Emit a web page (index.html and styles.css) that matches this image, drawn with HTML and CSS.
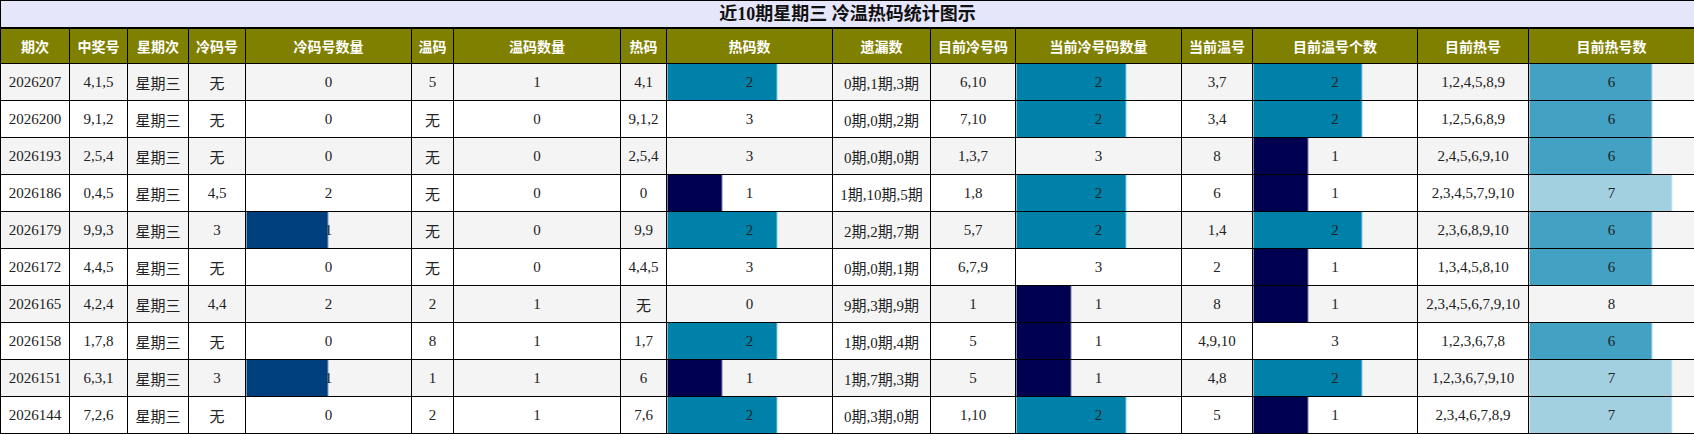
FILE: index.html
```html
<!DOCTYPE html>
<html lang="zh-CN">
<head>
<meta charset="utf-8">
<title>近10期星期三 冷温热码统计图示</title>
<link rel="stylesheet" href="styles.css">
</head>
<body>
<table class="stats">
  <colgroup>
    <col class="w69"><col class="w58"><col class="w61"><col class="w57"><col class="w166"><col class="w42"><col class="w167"><col class="w46"><col class="w166"><col class="w98"><col class="w85"><col class="w166"><col class="w71"><col class="w165"><col class="w111"><col class="w166">
  </colgroup>
  <thead>
    <tr class="title-row"><th colspan="16" class="title">近10期星期三 冷温热码统计图示</th></tr>
    <tr class="head-row">
      <th>期次</th><th>中奖号</th><th>星期次</th><th>冷码号</th><th>冷码号数量</th><th>温码</th><th>温码数量</th><th>热码</th><th>热码数</th><th>遗漏数</th><th>目前冷号码</th><th>当前冷号码数量</th><th>当前温号</th><th>目前温号个数</th><th>目前热号</th><th>目前热号数</th>
    </tr>
  </thead>
  <tbody>
    <tr>
      <td>2026207</td><td>4,1,5</td><td>星期三</td><td>无</td><td>0</td><td>5</td><td>1</td><td>4,1</td>
      <td class="bar teal" style="--w:66.4%">2</td><td>0期,1期,3期</td><td>6,10</td>
      <td class="bar teal" style="--w:66.4%">2</td><td>3,7</td>
      <td class="bar teal" style="--w:66.4%">2</td><td>1,2,4,5,8,9</td>
      <td class="bar sky" style="--w:74.5%">6</td>
    </tr>
    <tr>
      <td>2026200</td><td>9,1,2</td><td>星期三</td><td>无</td><td>0</td><td>无</td><td>0</td><td>9,1,2</td>
      <td>3</td><td>0期,0期,2期</td><td>7,10</td>
      <td class="bar teal" style="--w:66.4%">2</td><td>3,4</td>
      <td class="bar teal" style="--w:66.4%">2</td><td>1,2,5,6,8,9</td>
      <td class="bar sky" style="--w:74.5%">6</td>
    </tr>
    <tr>
      <td>2026193</td><td>2,5,4</td><td>星期三</td><td>无</td><td>0</td><td>无</td><td>0</td><td>2,5,4</td>
      <td>3</td><td>0期,0期,0期</td><td>1,3,7</td>
      <td>3</td><td>8</td>
      <td class="bar navy" style="--w:33.3%">1</td><td>2,4,5,6,9,10</td>
      <td class="bar sky" style="--w:74.5%">6</td>
    </tr>
    <tr>
      <td>2026186</td><td>0,4,5</td><td>星期三</td><td>4,5</td><td>2</td><td>无</td><td>0</td><td>0</td>
      <td class="bar navy" style="--w:33.3%">1</td><td>1期,10期,5期</td><td>1,8</td>
      <td class="bar teal" style="--w:66.4%">2</td><td>6</td>
      <td class="bar navy" style="--w:33.3%">1</td><td>2,3,4,5,7,9,10</td>
      <td class="bar pale" style="--w:86.7%">7</td>
    </tr>
    <tr>
      <td>2026179</td><td>9,9,3</td><td>星期三</td><td>3</td>
      <td class="bar cobalt" style="--w:49.7%">1</td><td>无</td><td>0</td><td>9,9</td>
      <td class="bar teal" style="--w:66.4%">2</td><td>2期,2期,7期</td><td>5,7</td>
      <td class="bar teal" style="--w:66.4%">2</td><td>1,4</td>
      <td class="bar teal" style="--w:66.4%">2</td><td>2,3,6,8,9,10</td>
      <td class="bar sky" style="--w:74.5%">6</td>
    </tr>
    <tr>
      <td>2026172</td><td>4,4,5</td><td>星期三</td><td>无</td><td>0</td><td>无</td><td>0</td><td>4,4,5</td>
      <td>3</td><td>0期,0期,1期</td><td>6,7,9</td>
      <td>3</td><td>2</td>
      <td class="bar navy" style="--w:33.3%">1</td><td>1,3,4,5,8,10</td>
      <td class="bar sky" style="--w:74.5%">6</td>
    </tr>
    <tr>
      <td>2026165</td><td>4,2,4</td><td>星期三</td><td>4,4</td><td>2</td><td>2</td><td>1</td><td>无</td>
      <td>0</td><td>9期,3期,9期</td><td>1</td>
      <td class="bar navy" style="--w:33.3%">1</td><td>8</td>
      <td class="bar navy" style="--w:33.3%">1</td><td>2,3,4,5,6,7,9,10</td>
      <td>8</td>
    </tr>
    <tr>
      <td>2026158</td><td>1,7,8</td><td>星期三</td><td>无</td><td>0</td><td>8</td><td>1</td><td>1,7</td>
      <td class="bar teal" style="--w:66.4%">2</td><td>1期,0期,4期</td><td>5</td>
      <td class="bar navy" style="--w:33.3%">1</td><td>4,9,10</td>
      <td>3</td><td>1,2,3,6,7,8</td>
      <td class="bar sky" style="--w:74.5%">6</td>
    </tr>
    <tr>
      <td>2026151</td><td>6,3,1</td><td>星期三</td><td>3</td>
      <td class="bar cobalt" style="--w:49.7%">1</td><td>1</td><td>1</td><td>6</td>
      <td class="bar navy" style="--w:33.3%">1</td><td>1期,7期,3期</td><td>5</td>
      <td class="bar navy" style="--w:33.3%">1</td><td>4,8</td>
      <td class="bar teal" style="--w:66.4%">2</td><td>1,2,3,6,7,9,10</td>
      <td class="bar pale" style="--w:86.7%">7</td>
    </tr>
    <tr>
      <td>2026144</td><td>7,2,6</td><td>星期三</td><td>无</td><td>0</td><td>2</td><td>1</td><td>7,6</td>
      <td class="bar teal" style="--w:66.4%">2</td><td>0期,3期,0期</td><td>1,10</td>
      <td class="bar teal" style="--w:66.4%">2</td><td>5</td>
      <td class="bar navy" style="--w:33.3%">1</td><td>2,3,4,6,7,8,9</td>
      <td class="bar pale" style="--w:86.7%">7</td>
    </tr>
  </tbody>
</table>
</body>
</html>
```
FILE: styles.css
```css
html, body {
  margin: 0;
  padding: 0;
  background: #ffffff;
}

.stats {
  border-collapse: collapse;
  table-layout: fixed;
  width: 1694px;
  font-family: "Liberation Serif", "Noto Sans CJK SC", serif;
  font-size: 15px;
  color: #222222;
}

.w69 { width: 69px; }
.w58 { width: 58px; }
.w61 { width: 61px; }
.w57 { width: 57px; }
.w166 { width: 166px; }
.w42 { width: 42px; }
.w167 { width: 167px; }
.w46 { width: 46px; }
.w98 { width: 98px; }
.w85 { width: 85px; }
.w71 { width: 71px; }
.w165 { width: 165px; }
.w111 { width: 111px; }

.stats th,
.stats td {
  border: 1px solid #000000;
  padding: 0;
  text-align: center;
  vertical-align: middle;
  white-space: nowrap;
  overflow: hidden;
}

.title-row { height: 27px; }

.title {
  background: #e6e6fa;
  color: #111111;
  font-family: "Liberation Serif", "Noto Sans CJK SC", serif;
  font-size: 18px;
  font-weight: bold;
  border-bottom: 2px solid #000000 !important;
  line-height: 24px;
}

.head-row { height: 36px; }

.head-row th {
  background: #808000;
  color: #ffffff;
  font-family: "Liberation Sans", "Noto Sans CJK SC", sans-serif;
  font-size: 14px;
  font-weight: bold;
}

.stats tbody tr { height: 37px; }
.stats tbody tr:nth-child(odd) td { background-color: #f4f4f4; }
.stats tbody tr:nth-child(even) td { background-color: #ffffff; }

.stats tbody td.bar {
  background-image: linear-gradient(to right,
    var(--c) calc(var(--w) - 1px),
    var(--edge) calc(var(--w) - 1px),
    var(--edge) var(--w),
    transparent var(--w));
}

.navy { --c: #000050; --edge: #7a7aa8; }
.cobalt { --c: #003f7e; --edge: #7f9fc4; }
.teal { --c: #0081a9; --edge: #86cbe0; }
.sky { --c: #43a1c4; --edge: #b0dcec; }
.pale { --c: #a3d0e1; --edge: #d2ebf4; }
```
